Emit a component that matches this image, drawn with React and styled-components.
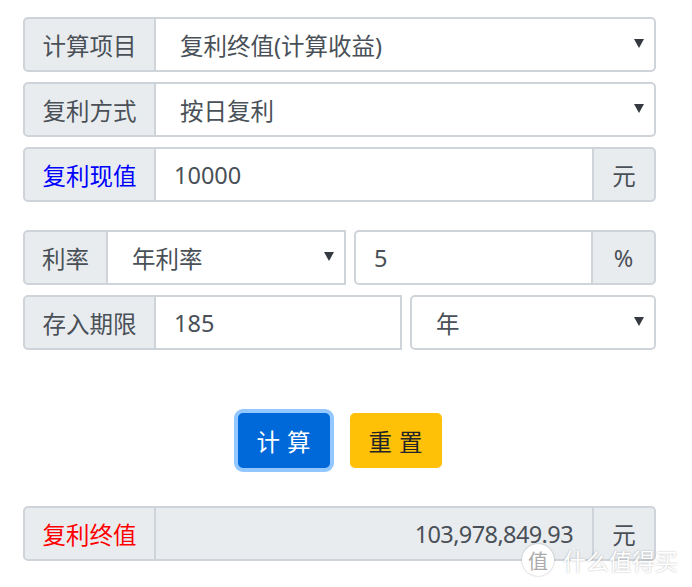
import styled, { createGlobalStyle } from 'styled-components';

const GlobalStyle = createGlobalStyle`
  body {
    margin: 0;
    background: #fff;
    font-family: "Noto Sans", "Noto Sans CJK SC", sans-serif;
  }
`;

const Page = styled.div`
  position: relative;
  width: 692px;
  height: 587px;
  overflow: hidden;
  padding: 17px 36px 0 23px;
  box-sizing: border-box;
`;

const Group = styled.div`
  display: flex;
  height: 55px;
  margin-bottom: ${(p) => p.$mb ?? 10}px;
  gap: ${(p) => p.$gap || 0}px;
`;

const Part = styled.div`
  display: flex;
  flex: 0 0 ${(p) => p.$w}px;
  min-width: 0;
`;

const Addon = styled.div`
  display: flex;
  align-items: center;
  justify-content: center;
  flex: 0 0 ${(p) => p.$w}px;
  box-sizing: border-box;
  background: #e9ecef;
  border: 2px solid #ced4da;
  border-radius: ${(p) => (p.$right ? '0 5px 5px 0' : '5px 0 0 5px')};
  ${(p) => (p.$right ? 'border-left: none;' : '')}
  color: ${(p) => p.$color || '#495057'};
  font-size: 23.5px;
`;

const Field = styled.div`
  display: flex;
  align-items: center;
  flex: 1;
  min-width: 0;
  box-sizing: border-box;
  background: ${(p) => (p.$readonly ? '#e9ecef' : '#fff')};
  border: 2px solid #ced4da;
  border-radius: ${(p) => p.$radius || '0'};
  ${(p) => (p.$noLeft ? 'border-left: none;' : '')}
  padding: 0 ${(p) => p.$pr ?? 18}px 0 ${(p) => p.$pl ?? 18}px;
  justify-content: ${(p) => (p.$right ? 'flex-end' : 'space-between')};
  letter-spacing: ${(p) => (p.$readonly ? '-0.6px' : 'normal')};
  color: #495057;
  font-size: 23.5px;
`;

const Arrow = styled.span`
  width: 0;
  height: 0;
  border-left: 5px solid transparent;
  border-right: 5px solid transparent;
  border-top: 9px solid #343a40;
  margin-top: -2px;
`;

const Buttons = styled.div`
  display: flex;
  justify-content: center;
  gap: 20px;
  margin: 63px 0 38px;
`;

const Button = styled.button`
  width: 92px;
  height: 55px;
  border: none;
  border-radius: 5px;
  font-family: inherit;
  font-size: 23.5px;
  letter-spacing: 7px;
  padding: 0 0 0 7px;
  background: ${(p) => (p.$primary ? '#0069d9' : '#ffc107')};
  color: ${(p) => (p.$primary ? '#fff' : '#212529')};
  box-shadow: ${(p) => (p.$primary ? '0 0 0 4px rgba(38, 143, 255, 0.5)' : 'none')};
`;

const Watermark = styled.div`
  position: absolute;
  left: 522px;
  top: 543px;
  display: flex;
  align-items: center;
  gap: 9px;
  color: #fff;
  font-size: 23px;
  text-shadow: 0 0 2px rgba(0, 0, 0, 0.3);
`;

const Badge = styled.span`
  width: 32px;
  height: 32px;
  border-radius: 50%;
  background: #fff;
  box-shadow: 0 0 2px rgba(0, 0, 0, 0.3);
  display: flex;
  align-items: center;
  justify-content: center;
  font-size: 20px;
  color: #aaa;
  text-shadow: none;
`;

function Select({ children, radius, noLeft, pl }) {
  return (
    <Field $radius={radius} $noLeft={noLeft} $pl={pl} $pr={10}>
      <span>{children}</span>
      <Arrow />
    </Field>
  );
}

export default function App() {
  return (
    <Page>
      <GlobalStyle />
      <Group>
        <Addon $w={133}>计算项目</Addon>
        <Select radius="0 5px 5px 0" noLeft pl={24}>
          复利终值(计算收益)
        </Select>
      </Group>
      <Group>
        <Addon $w={133}>复利方式</Addon>
        <Select radius="0 5px 5px 0" noLeft pl={24}>
          按日复利
        </Select>
      </Group>
      <Group $mb={28}>
        <Addon $w={133} $color="#0000ff">复利现值</Addon>
        <Field $noLeft>10000</Field>
        <Addon $w={62} $right>元</Addon>
      </Group>
      <Group $gap={8}>
        <Part $w={323}>
          <Addon $w={85}>利率</Addon>
          <Select noLeft pl={24}>年利率</Select>
        </Part>
        <Part $w={302}>
          <Field $radius="5px 0 0 5px">5</Field>
          <Addon $w={63} $right>%</Addon>
        </Part>
      </Group>
      <Group $gap={8} $mb={0}>
        <Part $w={379}>
          <Addon $w={133}>存入期限</Addon>
          <Field $noLeft>185</Field>
        </Part>
        <Part $w={246}>
          <Select radius="5px" pl={24}>年</Select>
        </Part>
      </Group>
      <Buttons>
        <Button $primary>计算</Button>
        <Button>重置</Button>
      </Buttons>
      <Group>
        <Addon $w={133} $color="#ff0000">复利终值</Addon>
        <Field $readonly $noLeft $right $pr={19}>103,978,849.93</Field>
        <Addon $w={62} $right>元</Addon>
      </Group>
      <Watermark>
        <Badge>值</Badge>
        什么值得买
      </Watermark>
    </Page>
  );
}
